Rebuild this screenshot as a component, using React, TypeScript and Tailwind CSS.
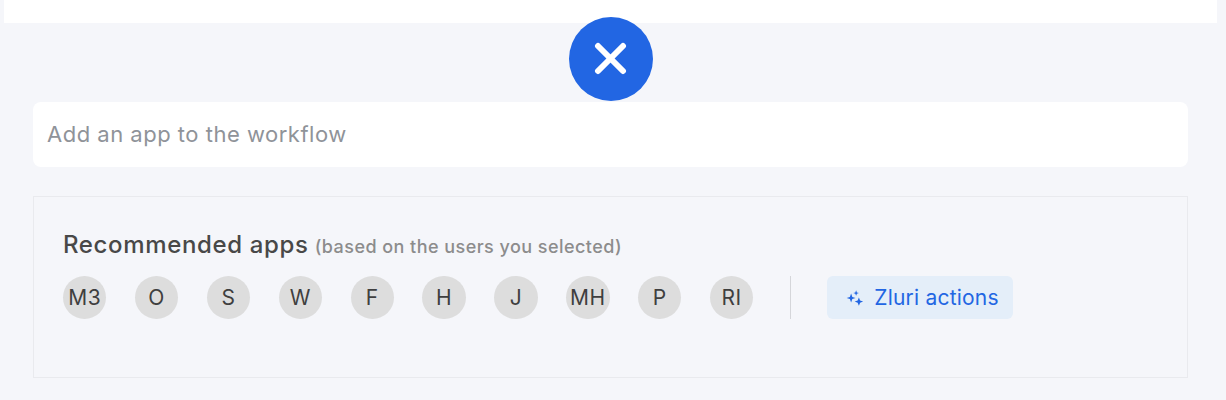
const apps = ["M3", "O", "S", "W", "F", "H", "J", "MH", "P", "RI"];

export default function App() {
  return (
    <div className="h-[400px] w-[1226px] overflow-hidden bg-[#f5f6fa] font-['Inter',sans-serif]">
      <div className="ml-[4px] h-[23px] w-[1213px] bg-white" />
      <div className="-mt-[6px] flex justify-center pr-[4px]">
        <button className="relative flex h-[84px] w-[84px] items-center justify-center rounded-full bg-[#2266e3]">
          <svg width="34" height="34" viewBox="0 0 34 34" fill="none" stroke="white" strokeWidth="6" strokeLinecap="round">
            <path d="M4 4 L29 29" />
            <path d="M29 4 L4 29" />
          </svg>
        </button>
      </div>
      <div className="ml-[33px] mt-[1px] flex h-[65px] w-[1155px] items-center rounded-[8px] bg-white px-[14px] text-[22px] tracking-[0.5px] text-[#8f9399]">
        Add an app to the workflow
      </div>
      <div className="ml-[33px] mt-[29px] h-[182px] w-[1155px] border border-[#e9eaee] px-[29px] pt-[32px]">
        <div className="flex h-[32px] items-baseline leading-[32px]">
          <span className="text-[24px] font-medium tracking-[0.65px] text-[#484848]">Recommended apps</span>
          <span className="ml-[6px] text-[18px] font-medium tracking-[0.45px] text-[#8c8c8c]">(based on the users you selected)</span>
        </div>
        <div className="mt-[15px] flex items-center">
          <div className="flex gap-[28.6px]">
            {apps.map((a) => (
              <div
                key={a}
                className="flex h-[43.3px] w-[43.3px] items-center justify-center rounded-full bg-[#dddddd] text-[21px] tracking-[0.5px] text-[#3f3f3f]"
              >
                {a}
              </div>
            ))}
          </div>
          <div className="ml-[37px] h-[43px] w-px bg-[#d5d6da]" />
          <button className="ml-[36px] flex h-[43px] w-[186px] items-center rounded-[6px] bg-[#e4eef9] pl-[18px] text-[21px] tracking-[0.2px] text-[#2266e3]">
            <svg width="20" height="20" viewBox="0 0 18 18" fill="#2266e3" className="mr-[9px]">
              <path d="M5.5 5 L6.6 8 L9.5 9 L6.6 10 L5.5 13 L4.4 10 L1.5 9 L4.4 8 Z" />
              <path d="M10 2 L10.7 4 L12.5 4.6 L10.7 5.2 L10 7 L9.3 5.2 L7.5 4.6 L9.3 4 Z" />
              <path d="M12.5 8.5 L13.6 11.2 L16.3 12.2 L13.6 13.3 L12.5 16 L11.4 13.3 L8.7 12.2 L11.4 11.2 Z" />
            </svg>
            Zluri actions
          </button>
        </div>
      </div>
    </div>
  );
}
